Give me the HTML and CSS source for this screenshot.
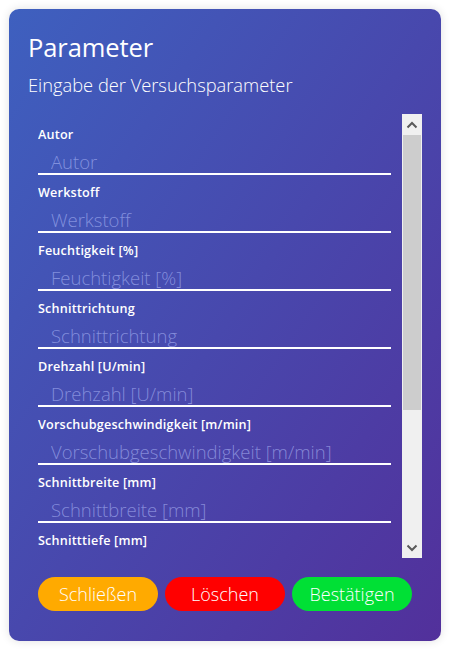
FILE: index.html
```html
<!DOCTYPE html>
<html lang="de">
<head>
<meta charset="utf-8">
<title>Parameter</title>
<link rel="stylesheet" href="styles.css">
</head>
<body>
<div class="card">
  <h1 class="title">Parameter</h1>
  <p class="subtitle">Eingabe der Versuchsparameter</p>
  <div class="scroller">
    <div class="fields">
      <div class="field"><label class="label">Autor</label><input class="input" placeholder="Autor"></div>
      <div class="field"><label class="label">Werkstoff</label><input class="input" placeholder="Werkstoff"></div>
      <div class="field"><label class="label">Feuchtigkeit [%]</label><input class="input" placeholder="Feuchtigkeit [%]"></div>
      <div class="field"><label class="label">Schnittrichtung</label><input class="input" placeholder="Schnittrichtung"></div>
      <div class="field"><label class="label">Drehzahl [U/min]</label><input class="input" placeholder="Drehzahl [U/min]"></div>
      <div class="field"><label class="label">Vorschubgeschwindigkeit [m/min]</label><input class="input" placeholder="Vorschubgeschwindigkeit [m/min]"></div>
      <div class="field"><label class="label">Schnittbreite [mm]</label><input class="input" placeholder="Schnittbreite [mm]"></div>
      <div class="field"><label class="label">Schnitttiefe [mm]</label><input class="input" placeholder="Schnitttiefe [mm]"></div>
      <div class="field"><label class="label">Bemerkung</label><input class="input" placeholder="Bemerkung"></div>
    </div>
    <div class="scrollbar">
      <div class="sb-btn">
        <svg width="12" height="8" viewBox="0 0 12 8"><path d="M1.5 6.5 L6 2 L10.5 6.5" fill="none" stroke="#5a5a5a" stroke-width="2"/></svg>
      </div>
      <div class="sb-track"><div class="sb-thumb"></div></div>
      <div class="sb-btn">
        <svg width="12" height="8" viewBox="0 0 12 8"><path d="M1.5 1.5 L6 6 L10.5 1.5" fill="none" stroke="#5a5a5a" stroke-width="2"/></svg>
      </div>
    </div>
  </div>
  <div class="actions">
    <button class="btn btn-close">Schließen</button>
    <button class="btn btn-delete">Löschen</button>
    <button class="btn btn-confirm">Bestätigen</button>
  </div>
</div>
</body>
</html>
```
FILE: styles.css
```css
* { box-sizing: border-box; }
html, body { margin: 0; padding: 0; background: #ffffff; }
body { font-family: "Open Sans", "Noto Sans", sans-serif; }

.card {
  margin: 9px;
  width: 432px;
  height: 632px;
  border-radius: 10px;
  background: linear-gradient(to bottom right, #3e60bf, #52309b);
  box-shadow: 0 0 10px rgba(0, 0, 0, 0.12);
  padding: 21px 19px 0 19px;
  display: flex;
  flex-direction: column;
  color: #fff;
}

.title {
  margin: 0;
  font-size: 25.5px;
  font-weight: 400;
  line-height: 34px;
  letter-spacing: -0.1px;
}

.subtitle {
  margin: 9px 0 0 0;
  font-size: 18.3px;
  font-weight: 300;
  line-height: 24px;
}

.scroller {
  margin: 17px 0 0 10px;
  height: 444px;
  display: flex;
  overflow: hidden;
}

.fields {
  flex: 1;
  padding: 3px 11px 0 0;
  overflow: hidden;
}

.field {
  padding-top: 10px;
  display: flex;
  flex-direction: column;
}

.label {
  font-size: 12.6px;
  font-weight: 600;
  line-height: 16px;
  letter-spacing: 0.2px;
  color: #fff;
}

.input {
  height: 32px;
  border: none;
  border-bottom: 2px solid #fff;
  background: transparent;
  padding: 6px 0 0 13px;
  font-family: "Open Sans", "Noto Sans", sans-serif;
  font-size: 18.5px;
  font-weight: 300;
  color: #fff;
  outline: none;
}
.input::placeholder { color: rgba(185, 195, 255, 0.55); }

.scrollbar {
  width: 20px;
  background: #f0f0f0;
  display: flex;
  flex-direction: column;
}
.sb-btn {
  height: 21px;
  display: flex;
  align-items: center;
  justify-content: center;
}
.sb-track { flex: 1; padding: 0 1px 0 1px; }
.sb-thumb { height: 275px; background: #cdcdcd; }

.actions {
  margin: 19px 0 0 10px;
  display: flex;
  gap: 7px;
}
.btn {
  width: 120px;
  height: 34px;
  border: none;
  border-radius: 17px;
  font-family: "Open Sans", "Noto Sans", sans-serif;
  font-size: 18px;
  font-weight: 300;
  line-height: 24px;
  color: #fff;
  padding: 0;
}
.btn-close { background: #ffaa00; }
.btn-delete { background: #ff0000; }
.btn-confirm { background: #00e035; }
```
